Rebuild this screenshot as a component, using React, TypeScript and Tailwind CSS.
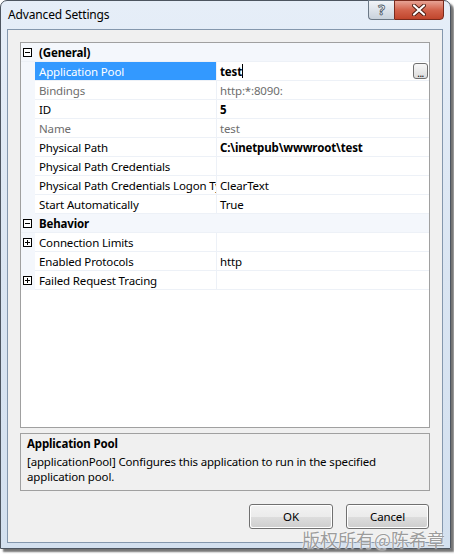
import React from 'react';

type Row = {
  label: string;
  value?: string;
  cat?: boolean;
  expander?: 'plus' | 'minus';
  bold?: boolean;
  gray?: boolean;
  selected?: boolean;
};

const rows: Row[] = [
  { label: '(General)', cat: true, expander: 'minus' },
  { label: 'Application Pool', value: 'test', bold: true, selected: true },
  { label: 'Bindings', value: 'http:*:8090:', gray: true },
  { label: 'ID', value: '5', bold: true },
  { label: 'Name', value: 'test', gray: true },
  { label: 'Physical Path', value: 'C:\\inetpub\\wwwroot\\test', bold: true },
  { label: 'Physical Path Credentials', value: '' },
  { label: 'Physical Path Credentials Logon Type', value: 'ClearText' },
  { label: 'Start Automatically', value: 'True' },
  { label: 'Behavior', cat: true, expander: 'minus' },
  { label: 'Connection Limits', value: '', expander: 'plus' },
  { label: 'Enabled Protocols', value: 'http' },
  { label: 'Failed Request Tracing', value: '', expander: 'plus' },
];

const Expander = ({ kind }: { kind: 'plus' | 'minus' }) => (
  <svg width="9" height="9" viewBox="0 0 9 9" className="block">
    <rect x="0.5" y="0.5" width="8" height="8" fill="white" stroke="#000" strokeWidth="1" />
    <path d="M2 4.5h5" stroke="#000" strokeWidth="1" />
    {kind === 'plus' && <path d="M4.5 2v5" stroke="#000" strokeWidth="1" />}
  </svg>
);

const GridRow = ({ row }: { row: Row }) => {
  if (row.cat) {
    return (
      <div className="flex h-[19px] bg-[#f4f7fc] border-b border-[#edf1f7]">
        <div className="w-[14px] flex items-center pl-[2px] shrink-0">
          {row.expander && <Expander kind={row.expander} />}
        </div>
        <div className="pl-[4px] font-bold leading-[19px] text-black">{row.label}</div>
      </div>
    );
  }
  return (
    <div className="flex h-[19px]">
      <div className="w-[14px] bg-[#f4f7fc] flex items-center pl-[2px] shrink-0">
        {row.expander && <Expander kind={row.expander} />}
      </div>
      <div
        className={`w-[181px] shrink-0 border-b border-[#edf1f7] overflow-hidden whitespace-nowrap pl-[4px] leading-[19px] ${
          row.selected ? 'bg-[#3399ff] text-white' : row.gray ? 'text-[#6d6d6d]' : 'text-black'
        }`}
      >
        {row.label}
      </div>
      <div className="w-px bg-[#edf1f7] shrink-0" />
      <div
        className={`flex-1 relative flex items-start border-b border-[#edf1f7] pl-[3px] leading-[19px] whitespace-nowrap ${
          row.bold ? 'font-bold text-black' : row.gray ? 'text-[#6d6d6d]' : 'text-black'
        }`}
      >
        <span>{row.value}</span>
        {row.selected && (
          <>
            <span className="w-px h-[14px] bg-black mt-[2px]" />
            <div className="absolute right-[1px] top-[1px] w-[15px] h-[16px] rounded-[3px] border border-[#707070] bg-gradient-to-b from-[#f8f8f8] to-[#dcdcdc] flex items-end justify-center">
              <span className="text-[10px] leading-[9px] font-normal tracking-[-0.5px]">...</span>
            </div>
          </>
        )}
      </div>
    </div>
  );
};

const WinButton = ({ label, className }: { label: string; className?: string }) => (
  <div className={`h-[25px] rounded-[3px] border border-[#707070] p-px bg-white ${className ?? ''}`}>
    <div className="h-full rounded-[2px] flex flex-col overflow-hidden relative">
      <div className="h-1/2 bg-gradient-to-b from-[#f2f2f2] to-[#ebebeb]" />
      <div className="h-1/2 bg-gradient-to-b from-[#dddddd] to-[#cfcfcf]" />
      <span className="absolute inset-0 flex items-center justify-center text-black">{label}</span>
    </div>
  </div>
);

export default function App() {
  return (
    <div
      className="relative w-[454px] h-[554px] bg-white text-[11.5px] tracking-[-0.15px] overflow-hidden"
      style={{ fontFamily: '"Noto Sans", "Open Sans", sans-serif' }}
    >
      {/* window */}
      <div className="w-[451px] h-[549px] border border-[#4d5560] rounded-t-[7px] bg-gradient-to-b from-[#e6eef8] via-[#dae5f2] to-[#d3e0ef] shadow-[3px_3px_2px_rgba(0,0,0,0.55)] flex flex-col pl-[6px] pr-[7px] pb-[5px]">
        {/* title bar */}
        <div className="h-[28px] shrink-0 relative flex items-center pl-[1px]">
          <span className="text-[12px] text-black">Advanced Settings</span>
          <div className="absolute top-[-1px] right-[-1px] flex">
            <div className="w-[26px] h-[20px] rounded-bl-[4px] border border-[#6b7886] border-r-0 bg-gradient-to-b from-[#f1f4f8] via-[#dde3ea] to-[#c9d2dc] flex items-center justify-center">
              <span
                className="text-[14px] font-bold leading-none text-white"
                style={{ WebkitTextStroke: '0.8px #4c5866' }}
              >
                ?
              </span>
            </div>
            <div className="w-[50px] h-[20px] rounded-br-[4px] border border-[#7a2a1c] bg-gradient-to-b from-[#e7a395] via-[#d2624b] to-[#c0452c] flex items-center justify-center">
              <svg width="14" height="12" viewBox="0 0 14 12">
                <path d="M2 1.5l10 9M12 1.5l-10 9" stroke="#4a1a10" strokeWidth="4" strokeLinecap="round" />
                <path d="M2 1.5l10 9M12 1.5l-10 9" stroke="#ffffff" strokeWidth="2.2" strokeLinecap="round" />
              </svg>
            </div>
          </div>
        </div>

        {/* client area */}
        <div className="flex-1 border border-[#8497ad] bg-[#f0f0f0] flex flex-col px-[12px] pt-[12px]">
          <div className="w-[410px] h-[386px] border border-[#a0a0a0] bg-white flex flex-col">
            {rows.map((r) => (
              <GridRow key={r.label} row={r} />
            ))}
          </div>

          <div className="w-[410px] h-[58px] mt-[5px] border border-[#a0a0a0] pl-[6px] pt-[2px] text-black">
            <div className="font-bold leading-[15px]">Application Pool</div>
            <div className="leading-[15px] mt-[3px] whitespace-nowrap">
              [applicationPool] Configures this application to run in the specified
              <br />
              application pool.
            </div>
          </div>

          <div className="flex justify-end gap-[13px] mt-[13px] pr-[1px]">
            <WinButton label="OK" className="w-[84px]" />
            <WinButton label="Cancel" className="w-[83px]" />
          </div>
        </div>
      </div>

      {/* watermark */}
      <div
        className="absolute left-[302px] top-[528px] text-[18px] leading-[22px] tracking-normal text-[#9c9c9c] whitespace-nowrap"
        style={{
          fontFamily: '"Noto Sans CJK SC", sans-serif',
          textShadow: '0 0 2px #ffffff, 0 0 1px #ffffff',
        }}
      >
        版权所有@陈希章
      </div>
    </div>
  );
}
